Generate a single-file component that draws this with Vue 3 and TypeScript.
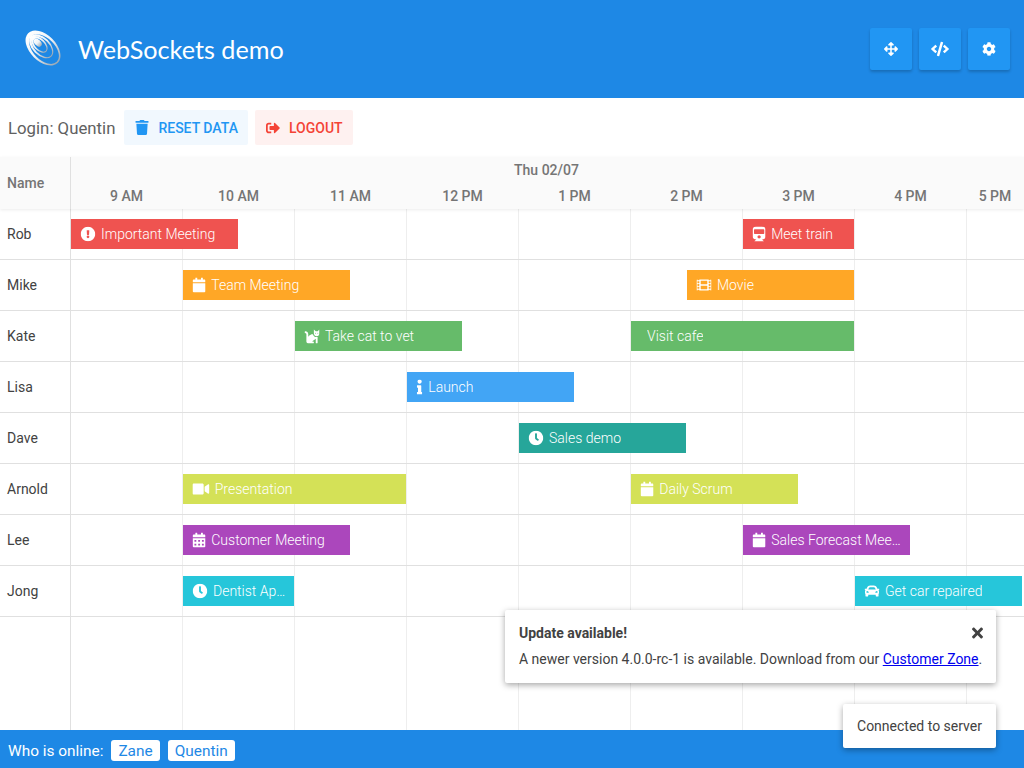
<template>
  <div class="page">
    <header class="app-header">
      <div class="brand">
        <svg class="logo" viewBox="0 0 40 40" width="40" height="40">
          <defs>
            <linearGradient id="swirl" x1="0" y1="0" x2="1" y2="0">
              <stop offset="0" stop-color="#ffffff" />
              <stop offset="0.5" stop-color="#eef2f6" />
              <stop offset="1" stop-color="#9aa7b2" />
            </linearGradient>
          </defs>
          <g transform="rotate(45 20 20)" fill="url(#swirl)" fill-rule="evenodd">
            <path v-for="(d, i) in logoRings" :key="i" :d="d" />
          </g>
        </svg>
        <h1 class="title">WebSockets demo</h1>
      </div>
      <div class="header-buttons">
        <button v-for="b in headerButtons" :key="b.name" class="header-btn" type="button" :aria-label="b.name">
          <svg :viewBox="icons[b.name].box" :width="b.size" :height="b.size" fill="#fff"><path :d="icons[b.name].d" /></svg>
        </button>
      </div>
    </header>

    <div class="toolbar">
      <span class="login">Login: Quentin</span>
      <button class="tool-btn reset" type="button">
        <svg :viewBox="icons.trash.box" width="14" height="15" fill="currentColor"><path :d="icons.trash.d" /></svg>
        Reset data
      </button>
      <button class="tool-btn logout" type="button">
        <svg :viewBox="icons.signout.box" width="14" height="14" fill="currentColor"><path :d="icons.signout.d" /></svg>
        Logout
      </button>
    </div>

    <div class="scheduler">
      <div class="sched-header">
        <div class="name-head">Name</div>
        <div class="time-head">
          <div class="day">Thu 02/07</div>
          <div class="hours">
            <div v-for="h in hours" :key="h" class="hour">{{ h }}</div>
          </div>
        </div>
      </div>

      <div class="sched-body">
        <div class="names">
          <div v-for="r in rows" :key="r.name" class="name-cell">{{ r.name }}</div>
        </div>
        <div class="timeline">
          <div v-for="r in rows" :key="r.name" class="track">
            <div
              v-for="e in r.events"
              :key="e.text"
              class="event"
              :class="e.color"
              :style="barStyle(e.start, e.hours)"
            >
              <svg v-if="e.icon" class="event-icon" :viewBox="icons[e.icon].box" :style="iconStyle(e.icon)" fill="#fff"><path :d="icons[e.icon].d" /></svg>
              <span v-else class="event-noicon"></span>
              <span class="event-text">{{ e.text }}</span>
            </div>
          </div>
        </div>
      </div>
    </div>

    <footer class="app-footer">
      <span class="who">Who is online:</span>
      <span class="user-tag">Zane</span>
      <span class="user-tag">Quentin</span>
    </footer>

    <div class="toast update">
      <div class="toast-head">
        <strong>Update available!</strong>
        <svg class="close" :viewBox="icons.times.box" width="11" height="16" fill="#424242"><path :d="icons.times.d" /></svg>
      </div>
      <div>A newer version 4.0.0-rc-1 is available. Download from our <a href="#">Customer Zone</a>.</div>
    </div>
    <div class="toast connected">Connected to server</div>
  </div>
</template>

<script setup lang="ts">
interface Icon { box: string; d: string }
interface Ev { text: string; start: number; hours: number; color: string; icon?: string }

const HOUR = 112

const icons: Record<string, Icon> = {
  move: { box: '0 0 512 512', d: 'M352.201 425.775l-79.196 79.196c-9.373 9.373-24.568 9.373-33.941 0l-79.196-79.196c-15.119-15.119-4.411-40.971 16.971-40.97h51.162L228 284H127.196v51.162c0 21.382-25.851 32.09-40.971 16.971L7.029 272.937c-9.373-9.373-9.373-24.569 0-33.941L86.225 159.8c15.119-15.119 40.971-4.411 40.971 16.971V228H228V127.196h-51.23c-21.382 0-32.09-25.851-16.971-40.971l79.196-79.196c9.373-9.373 24.568-9.373 33.941 0l79.196 79.196c15.119 15.119 4.411 40.971-16.971 40.971h-51.162V228h100.804v-51.162c0-21.382 25.851-32.09 40.97-16.971l79.196 79.196c9.373 9.373 9.373 24.569 0 33.941L425.773 352.2c-15.119 15.119-40.971 4.411-40.97-16.971V284H284v100.804h51.23c21.382 0 32.09 25.851 16.971 40.971z' },
  code: { box: '0 0 640 512', d: 'M278.9 511.5l-61-17.7c-6.4-1.8-10-8.5-8.2-14.9L346.2 8.7c1.8-6.4 8.5-10 14.9-8.2l61 17.7c6.4 1.8 10 8.5 8.2 14.9L293.8 503.3c-1.9 6.4-8.5 10.1-14.9 8.2zm-114-112.2l43.5-46.4c4.6-4.9 4.3-12.7-.8-17.2L117 256l90.6-79.7c5.1-4.5 5.5-12.3.8-17.2l-43.5-46.4c-4.5-4.8-12.1-5.1-17-.5L3.8 247.2c-5.1 4.7-5.1 12.8 0 17.5l144.1 135.1c4.9 4.6 12.5 4.4 17-.5zm327.2.6l144.1-135.1c5.1-4.7 5.1-12.8 0-17.5L492.1 112.1c-4.8-4.5-12.4-4.3-17 .5L431.6 159c-4.6 4.9-4.3 12.7.8 17.2L523 256l-90.6 79.7c-5.1 4.5-5.5 12.3-.8 17.2l43.5 46.4c4.5 4.9 12.1 5.1 17 .6z' },
  cog: { box: '0 0 512 512', d: 'M487.4 315.7l-42.6-24.6c4.3-23.2 4.3-47 0-70.2l42.6-24.6c4.9-2.8 7.1-8.6 5.5-14-11.1-35.6-30-67.8-54.7-94.6-3.8-4.1-10-5.1-14.8-2.3L380.8 110c-17.9-15.4-38.5-27.3-60.8-35.1V25.8c0-5.6-3.9-10.5-9.4-11.7-36.7-8.2-74.3-7.8-109.2 0-5.5 1.2-9.4 6.1-9.4 11.7V75c-22.2 7.9-42.8 19.8-60.8 35.1L88.7 85.5c-4.9-2.8-11-1.9-14.8 2.3-24.7 26.7-43.6 58.9-54.7 94.6-1.7 5.4.6 11.2 5.5 14L67.3 221c-4.3 23.2-4.3 47 0 70.2l-42.6 24.6c-4.9 2.8-7.1 8.6-5.5 14 11.1 35.6 30 67.8 54.7 94.6 3.8 4.1 10 5.1 14.8 2.3l42.6-24.6c17.9 15.4 38.5 27.3 60.8 35.1v49.2c0 5.6 3.9 10.5 9.4 11.7 36.7 8.2 74.3 7.8 109.2 0 5.5-1.2 9.4-6.1 9.4-11.7v-49.2c22.2-7.9 42.8-19.8 60.8-35.1l42.6 24.6c4.9 2.8 11 1.9 14.8-2.3 24.7-26.7 43.6-58.9 54.7-94.6 1.5-5.5-.7-11.3-5.6-14.1zM256 336c-44.1 0-80-35.9-80-80s35.9-80 80-80 80 35.9 80 80-35.9 80-80 80z' },
  trash: { box: '0 0 448 512', d: 'M432 32H312l-9.4-18.7A24 24 0 0 0 281.1 0H166.8a23.72 23.72 0 0 0-21.4 13.3L136 32H16A16 16 0 0 0 0 48v32a16 16 0 0 0 16 16h416a16 16 0 0 0 16-16V48a16 16 0 0 0-16-16zM53.2 467a48 48 0 0 0 47.9 45h245.8a48 48 0 0 0 47.9-45L416 128H32z' },
  signout: { box: '0 0 512 512', d: 'M497 273L329 441c-15 15-41 4.5-41-17v-96H152c-13.3 0-24-10.7-24-24v-96c0-13.3 10.7-24 24-24h136V88c0-21.4 25.9-32 41-17l168 168c9.3 9.4 9.3 24.6 0 34zM192 436v-40c0-6.6-5.4-12-12-12H96c-17.7 0-32-14.3-32-32V160c0-17.7 14.3-32 32-32h84c6.6 0 12-5.4 12-12V76c0-6.6-5.4-12-12-12H96c-53 0-96 43-96 96v192c0 53 43 96 96 96h84c6.6 0 12-5.4 12-12z' },
  alert: { box: '0 0 512 512', d: 'M504 256c0 136.997-111.043 248-248 248S8 392.997 8 256C8 119.083 119.043 8 256 8s248 111.083 248 248zm-248 50c-25.405 0-46 20.595-46 46s20.595 46 46 46 46-20.595 46-46-20.595-46-46-46zm-43.673-165.346l7.418 136c.347 6.364 5.609 11.346 11.982 11.346h48.546c6.373 0 11.635-4.982 11.982-11.346l7.418-136c.375-6.874-5.098-12.654-11.982-12.654h-63.383c-6.884 0-12.356 5.78-11.981 12.654z' },
  calendar: { box: '0 0 448 512', d: 'M12 192h424c6.6 0 12 5.4 12 12v260c0 26.5-21.5 48-48 48H48c-26.5 0-48-21.5-48-48V204c0-6.6 5.4-12 12-12zm436-44v-36c0-26.5-21.5-48-48-48h-48V12c0-6.6-5.4-12-12-12h-40c-6.6 0-12 5.4-12 12v52H160V12c0-6.6-5.4-12-12-12h-40c-6.6 0-12 5.4-12 12v52H48C21.5 64 0 85.5 0 112v36c0 6.6 5.4 12 12 12h424c6.6 0 12-5.4 12-12z' },
  calendarAlt: { box: '0 0 448 512', d: 'M0 464c0 26.5 21.5 48 48 48h352c26.5 0 48-21.5 48-48V192H0v272zm320-196c0-6.6 5.4-12 12-12h40c6.6 0 12 5.4 12 12v40c0 6.6-5.4 12-12 12h-40c-6.6 0-12-5.4-12-12v-40zm0 128c0-6.6 5.4-12 12-12h40c6.6 0 12 5.4 12 12v40c0 6.6-5.4 12-12 12h-40c-6.6 0-12-5.4-12-12v-40zM192 268c0-6.6 5.4-12 12-12h40c6.6 0 12 5.4 12 12v40c0 6.6-5.4 12-12 12h-40c-6.6 0-12-5.4-12-12v-40zm0 128c0-6.6 5.4-12 12-12h40c6.6 0 12 5.4 12 12v40c0 6.6-5.4 12-12 12h-40c-6.6 0-12-5.4-12-12v-40zM64 268c0-6.6 5.4-12 12-12h40c6.6 0 12 5.4 12 12v40c0 6.6-5.4 12-12 12H76c-6.6 0-12-5.4-12-12v-40zm0 128c0-6.6 5.4-12 12-12h40c6.6 0 12 5.4 12 12v40c0 6.6-5.4 12-12 12H76c-6.6 0-12-5.4-12-12v-40zM400 64h-48V16c0-8.8-7.2-16-16-16h-32c-8.8 0-16 7.2-16 16v48H160V16c0-8.8-7.2-16-16-16h-32c-8.8 0-16 7.2-16 16v48H48C21.5 64 0 85.5 0 112v48h448v-48c0-26.5-21.5-48-48-48z' },
  clock: { box: '0 0 512 512', d: 'M256,8C119,8,8,119,8,256S119,504,256,504,504,393,504,256,393,8,256,8Zm92.49,313h0l-20,25a16,16,0,0,1-22.49,2.5h0l-67-49.72a40,40,0,0,1-15-31.23V112a16,16,0,0,1,16-16h32a16,16,0,0,1,16,16V256l58,42.5A16,16,0,0,1,348.49,321Z' },
  info: { box: '0 0 192 512', d: 'M20 424.229h20V279.771H20c-11.046 0-20-8.954-20-20V212c0-11.046 8.954-20 20-20h112c11.046 0 20 8.954 20 20v212.229h20c11.046 0 20 8.954 20 20V492c0 11.046-8.954 20-20 20H20c-11.046 0-20-8.954-20-20v-47.771c0-11.046 8.954-20 20-20zM96 0C56.235 0 24 32.235 24 72s32.235 72 72 72 72-32.235 72-72S135.764 0 96 0z' },
  video: { box: '0 0 576 512', d: 'M336.2 64H47.8C21.4 64 0 85.4 0 111.8v288.4C0 426.6 21.4 448 47.8 448h288.4c26.4 0 47.8-21.4 47.8-47.8V111.8c0-26.4-21.4-47.8-47.8-47.8zm189.4 37.7L416 177.3v157.4l109.6 75.5c21.2 14.6 50.4-.3 50.4-25.8V127.5c0-25.4-29.1-40.4-50.4-25.8z' },
  film: { box: '0 0 512 512', d: 'M488 64h-8v20c0 6.6-5.4 12-12 12h-40c-6.6 0-12-5.4-12-12V64H96v20c0 6.6-5.4 12-12 12H44c-6.6 0-12-5.4-12-12V64h-8C10.7 64 0 74.7 0 88v336c0 13.3 10.7 24 24 24h8v-20c0-6.6 5.4-12 12-12h40c6.6 0 12 5.4 12 12v20h320v-20c0-6.6 5.4-12 12-12h40c6.6 0 12 5.4 12 12v20h8c13.3 0 24-10.7 24-24V88c0-13.3-10.7-24-24-24zM96 372c0 6.6-5.4 12-12 12H44c-6.6 0-12-5.4-12-12v-40c0-6.6 5.4-12 12-12h40c6.6 0 12 5.4 12 12v40zm0-96c0 6.6-5.4 12-12 12H44c-6.6 0-12-5.4-12-12v-40c0-6.6 5.4-12 12-12h40c6.6 0 12 5.4 12 12v40zm0-96c0 6.6-5.4 12-12 12H44c-6.6 0-12-5.4-12-12v-40c0-6.6 5.4-12 12-12h40c6.6 0 12 5.4 12 12v40zm272 208c0 6.6-5.4 12-12 12H156c-6.6 0-12-5.4-12-12v-96c0-6.6 5.4-12 12-12h200c6.6 0 12 5.4 12 12v96zm0-168c0 6.6-5.4 12-12 12H156c-6.6 0-12-5.4-12-12v-96c0-6.6 5.4-12 12-12h200c6.6 0 12 5.4 12 12v96zm112 152c0 6.6-5.4 12-12 12h-40c-6.6 0-12-5.4-12-12v-40c0-6.6 5.4-12 12-12h40c6.6 0 12 5.4 12 12v40zm0-96c0 6.6-5.4 12-12 12h-40c-6.6 0-12-5.4-12-12v-40c0-6.6 5.4-12 12-12h40c6.6 0 12 5.4 12 12v40zm0-96c0 6.6-5.4 12-12 12h-40c-6.6 0-12-5.4-12-12v-40c0-6.6 5.4-12 12-12h40c6.6 0 12 5.4 12 12v40z' },
  train: { box: '0 0 448 512', d: 'M448 96v256c0 51.815-61.624 96-130.022 96l62.98 49.721C386.905 502.417 383.562 512 376 512H72c-7.578 0-10.892-9.594-4.957-14.279L130.022 448C61.82 448 0 403.954 0 352V96C0 42.981 64 0 128 0h192c65 0 128 42.981 128 96zm-48 136V120c0-13.255-10.745-24-24-24H72c-13.255 0-24 10.745-24 24v112c0 13.255 10.745 24 24 24h304c13.255 0 24-10.745 24-24zm-176 64c-30.928 0-56 25.072-56 56s25.072 56 56 56 56-25.072 56-56-25.072-56-56-56z' },
  car: { box: '0 0 512 512', d: 'M499.99 176h-59.87l-16.64-41.6C406.38 91.63 365.57 64 319.5 64h-127c-46.06 0-86.88 27.63-103.99 70.4L71.87 176H12.01C4.2 176-1.53 183.34.37 190.91l6 24C7.7 220.25 12.5 224 18.01 224h20.07C24.65 235.73 16 252.78 16 272v48c0 16.12 6.16 30.67 16 41.93V416c0 17.67 14.33 32 32 32h32c17.67 0 32-14.33 32-32v-32h256v32c0 17.67 14.33 32 32 32h32c17.67 0 32-14.33 32-32v-54.07c9.84-11.25 16-25.8 16-41.93v-48c0-19.22-8.65-36.27-22.07-48H494c5.51 0 10.31-3.75 11.64-9.09l6-24c1.89-7.57-3.84-14.91-11.65-14.91zm-352.06-17.83c7.29-18.22 24.94-30.17 44.57-30.17h127c19.63 0 37.28 11.95 44.57 30.17L384 208H128l19.93-49.83zM96 319.8c-19.2 0-32-12.76-32-31.9S76.8 256 96 256s48 28.71 48 47.85-28.8 15.95-48 15.95zm320 0c-19.2 0-48 3.19-48-15.95S396.8 256 416 256s32 12.76 32 31.9-12.8 31.9-32 31.9z' },
  cat: { box: '0 0 512 512', d: 'M290.59 192c-20.18 0-106.82 1.98-162.59 85.95V192c0-52.94-43.06-96-96-96-17.67 0-32 14.33-32 32s14.33 32 32 32c17.64 0 32 14.36 32 32v256c0 35.3 28.7 64 64 64h176c8.84 0 16-7.16 16-16v-16c0-17.67-14.33-32-32-32h-32l128-96v144c0 8.84 7.16 16 16 16h32c8.84 0 16-7.16 16-16V289.86c-10.29 2.67-20.89 4.54-32 4.54-61.81 0-113.52-44.05-125.41-102.4zM448 96h-64l-64-64v134.4c0 53.02 42.98 96 96 96s96-42.98 96-96V32l-64 64zm-72 80c-8.84 0-16-7.16-16-16s7.16-16 16-16 16 7.16 16 16-7.16 16-16 16zm80 0c-8.84 0-16-7.16-16-16s7.16-16 16-16 16 7.16 16 16-7.16 16-16 16z' },
  times: { box: '0 0 352 512', d: 'M242.72 256l100.07-100.07c12.28-12.28 12.28-32.19 0-44.48l-22.24-22.24c-12.28-12.28-32.19-12.28-44.48 0L176 189.28 75.93 89.21c-12.28-12.28-32.19-12.28-44.48 0L9.21 111.45c-12.28 12.28-12.28 32.19 0 44.48L109.28 256 9.21 356.07c-12.28 12.28-12.28 32.19 0 44.48l22.24 22.24c12.28 12.28 32.2 12.28 44.48 0L176 322.72l100.07 100.07c12.28 12.28 32.2 12.28 44.48 0l22.24-22.24c12.28-12.28 12.28-32.19 0-44.48L242.72 256z' }
}

const headerButtons = [
  { name: 'move', size: 14 },
  { name: 'code', size: 18 },
  { name: 'cog', size: 14 }
]

const hours = ['9 AM', '10 AM', '11 AM', '12 PM', '1 PM', '2 PM', '3 PM', '4 PM', '5 PM']

const rows: { name: string; events: Ev[] }[] = [
  { name: 'Rob', events: [
    { text: 'Important Meeting', start: 0, hours: 1.5, color: 'red', icon: 'alert' },
    { text: 'Meet train', start: 6, hours: 1, color: 'red', icon: 'train' }
  ] },
  { name: 'Mike', events: [
    { text: 'Team Meeting', start: 1, hours: 1.5, color: 'orange', icon: 'calendar' },
    { text: 'Movie', start: 5.5, hours: 1.5, color: 'orange', icon: 'film' }
  ] },
  { name: 'Kate', events: [
    { text: 'Take cat to vet', start: 2, hours: 1.5, color: 'green', icon: 'cat' },
    { text: 'Visit cafe', start: 5, hours: 2, color: 'green' }
  ] },
  { name: 'Lisa', events: [
    { text: 'Launch', start: 3, hours: 1.5, color: 'blue', icon: 'info' }
  ] },
  { name: 'Dave', events: [
    { text: 'Sales demo', start: 4, hours: 1.5, color: 'teal', icon: 'clock' }
  ] },
  { name: 'Arnold', events: [
    { text: 'Presentation', start: 1, hours: 2, color: 'lime', icon: 'video' },
    { text: 'Daily Scrum', start: 5, hours: 1.5, color: 'lime', icon: 'calendar' }
  ] },
  { name: 'Lee', events: [
    { text: 'Customer Meeting', start: 1, hours: 1.5, color: 'purple', icon: 'calendarAlt' },
    { text: 'Sales Forecast Meeting', start: 6, hours: 1.5, color: 'purple', icon: 'calendar' }
  ] },
  { name: 'Jong', events: [
    { text: 'Dentist Appointment', start: 1, hours: 1, color: 'cyan', icon: 'clock' },
    { text: 'Get car repaired', start: 7, hours: 1.5, color: 'cyan', icon: 'car' }
  ] }
]

// each ring is an outer ellipse with a hole pushed towards the thin end
const ellipse = (cx: number, rx: number, ry: number) =>
  `M${cx - rx} 20a${rx} ${ry} 0 1 0 ${2 * rx} 0a${rx} ${ry} 0 1 0 ${-2 * rx} 0z`

const logoRings = [
  ellipse(20, 21, 13) + ellipse(21.5, 18, 10.8),
  ellipse(17.5, 14.5, 9) + ellipse(18.5, 12.5, 7.2),
  ellipse(15, 10, 6) + ellipse(15.8, 8.2, 4.4),
  ellipse(12.5, 4.8, 3)
]

const barStyle = (start: number, length: number) => ({
  left: start * HOUR + 'px',
  width: length * HOUR - 1 + 'px'
})

// font-awesome style: height is fixed, width follows the glyph's box
const iconStyle = (name: string) => {
  const w = Number(icons[name].box.split(' ')[2])
  return { width: (w / 512) * 14 + 'px' }
}
</script>

<style>
html, body {
  margin: 0;
  height: 100%;
  overflow: hidden;
}
</style>

<style scoped>
.page {
  position: relative;
  height: 768px;
  display: flex;
  flex-direction: column;
  font-family: Roboto, "Liberation Sans", sans-serif;
  font-size: 14px;
  color: #424242;
  background: #fff;
  overflow: hidden;
}

.app-header {
  height: 98px;
  flex: none;
  display: flex;
  align-items: center;
  justify-content: space-between;
  padding: 0 14px 0 23px;
  box-sizing: border-box;
  background: #1e88e5;
}

.brand {
  display: flex;
  align-items: center;
  gap: 15px;
}

.logo {
  margin-bottom: 3px;
}

.title {
  margin: 0;
  font-family: Lato, sans-serif;
  font-size: 25.2px;
  font-weight: 400;
  color: #fff;
}

.header-buttons {
  display: flex;
  gap: 7px;
}

.header-btn {
  width: 42px;
  height: 42px;
  display: flex;
  align-items: center;
  justify-content: center;
  padding: 0;
  border: 0;
  border-radius: 2px;
  background: #2196f3;
  box-shadow: 0 2px 3px rgba(0, 0, 0, 0.2);
}

.toolbar {
  height: 59px;
  flex: none;
  display: flex;
  align-items: center;
  padding: 0 8px;
  box-sizing: border-box;
}

.login {
  font-size: 16.8px;
  color: #616161;
  margin-right: 9px;
}

.tool-btn {
  height: 35px;
  display: flex;
  align-items: center;
  gap: 9px;
  padding: 0 10px 0 11px;
  border: 0;
  border-radius: 2px;
  font-family: inherit;
  font-size: 14px;
  font-weight: 500;
  text-transform: uppercase;
}

.tool-btn.reset {
  margin-right: 7px;
  color: #2196f3;
  background: #f1f8fe;
}

.tool-btn.logout {
  color: #f44336;
  background: #fef1f0;
}

.scheduler {
  flex: 1;
  min-height: 0;
  display: flex;
  flex-direction: column;
}

.sched-header {
  height: 52px;
  flex: none;
  display: flex;
  position: relative;
  z-index: 1;
  background: #fafafa;
  box-shadow: 0 1px 3px rgba(0, 0, 0, 0.08);
  font-weight: 500;
  color: #757575;
}

.name-head {
  width: 71px;
  flex: none;
  box-sizing: border-box;
  padding-left: 7px;
  display: flex;
  align-items: center;
  border-right: 1px solid #e0e0e0;
}

.time-head {
  flex: 1;
  min-width: 0;
}

.day {
  height: 26px;
  display: flex;
  align-items: center;
  justify-content: center;
  padding-right: 2px;
}

.hours {
  height: 26px;
  display: flex;
}

.hour {
  width: 112px;
  flex: none;
  box-sizing: border-box;
  padding-right: 1px;
  text-align: center;
  line-height: 26px;
}

.hour:last-child {
  width: 57px;
}

.sched-body {
  flex: 1;
  min-height: 0;
  display: flex;
}

.names {
  width: 71px;
  flex: none;
  box-sizing: border-box;
  border-right: 1px solid #e0e0e0;
}

.name-cell {
  height: 51px;
  box-sizing: border-box;
  padding-left: 7px;
  display: flex;
  align-items: center;
  border-bottom: 1px solid #e0e0e0;
  margin-right: -1px;
}

.timeline {
  flex: 1;
  min-width: 0;
  background-image: linear-gradient(to right, transparent 111px, #eeeeee 111px);
  background-size: 112px 100%;
}

.track {
  position: relative;
  height: 51px;
  box-sizing: border-box;
  border-bottom: 1px solid #e0e0e0;
}

.event {
  position: absolute;
  top: 10px;
  height: 30px;
  display: flex;
  align-items: center;
  box-sizing: border-box;
  padding: 0 8px 0 10px;
  color: #fff;
  font-weight: 300;
}

.event-icon {
  height: 14px;
  flex: none;
  margin-right: 6px;
  transform: scale(1.07);
}

.event-noicon {
  width: 6px;
  flex: none;
}

.event-text {
  min-width: 0;
  overflow: hidden;
  white-space: nowrap;
  text-overflow: ellipsis;
}

.red { background: #ef5350; }
.orange { background: #ffa726; }
.green { background: #66bb6a; }
.blue { background: #42a5f5; }
.teal { background: #26a69a; }
.lime { background: #d4e157; }
.purple { background: #ab47bc; }
.cyan { background: #26c6da; }

.app-footer {
  height: 38px;
  flex: none;
  display: flex;
  align-items: center;
  padding: 3px 8px 0;
  box-sizing: border-box;
  background: #1e88e5;
  color: #fff;
  font-size: 15.4px;
}

.who {
  margin-right: 8px;
}

.user-tag {
  height: 21px;
  display: flex;
  align-items: center;
  padding: 0 7px;
  margin-right: 8px;
  border-radius: 3px;
  background: #fff;
  color: #1e88e5;
}

.toast {
  position: absolute;
  right: 28px;
  box-sizing: border-box;
  background: #fff;
  border-radius: 2px;
  color: #424242;
  box-shadow: 0 2px 6px rgba(0, 0, 0, 0.35);
}

.toast.update {
  top: 610px;
  width: 491px;
  height: 73px;
  padding: 13px 14px;
  line-height: 20px;
  white-space: nowrap;
}

.toast-head {
  display: flex;
  align-items: center;
  justify-content: space-between;
  margin-bottom: 6px;
}

.toast-head strong {
  font-weight: 700;
}

.close {
  margin-right: -1px;
}

.toast.connected {
  top: 704px;
  width: 153px;
  height: 44px;
  display: flex;
  align-items: center;
  justify-content: center;
}

.toast a {
  color: #0000ee;
}
</style>
